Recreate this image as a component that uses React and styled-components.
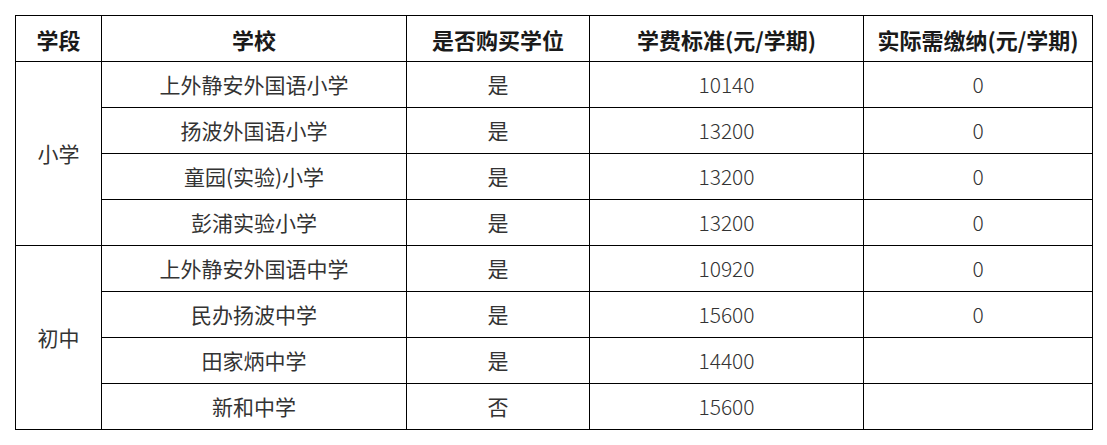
import React from "react";
import styled, { createGlobalStyle } from "styled-components";

const Global = createGlobalStyle`
  html, body { margin: 0; padding: 0; background: #fff; }
  body { font-family: "Noto Sans CJK SC", "Noto Sans", sans-serif; }
`;

const Page = styled.div`
  padding: 15px 0 0 15px;
`;

const Table = styled.table`
  border-collapse: collapse;
  table-layout: fixed;
  width: 1077px;
  border: 1px solid #000;
`;

const HeadCell = styled.th`
  height: 45px;
  padding: 0;
  border: 1px solid #000;
  font-size: 22px;
  font-weight: 700;
  color: #1a1a1a;
  text-align: center;
  vertical-align: middle;
  line-height: 1;
`;

const Cell = styled.td`
  height: 45px;
  padding: 0;
  border: 1px solid #000;
  font-size: 21px;
  font-weight: ${(p) => (p.$num ? 300 : 400)};
  color: #333;
  text-align: center;
  vertical-align: middle;
  line-height: 1;
`;

const widths = [86, 305, 183, 274, 229];
const headers = ["学段", "学校", "是否购买学位", "学费标准(元/学期)", "实际需缴纳(元/学期)"];

const groups = [
  {
    stage: "小学",
    rows: [
      ["上外静安外国语小学", "是", "10140", "0"],
      ["扬波外国语小学", "是", "13200", "0"],
      ["童园(实验)小学", "是", "13200", "0"],
      ["彭浦实验小学", "是", "13200", "0"],
    ],
  },
  {
    stage: "初中",
    rows: [
      ["上外静安外国语中学", "是", "10920", "0"],
      ["民办扬波中学", "是", "15600", "0"],
      ["田家炳中学", "是", "14400", ""],
      ["新和中学", "否", "15600", ""],
    ],
  },
];

export default function App() {
  return (
    <Page>
      <Global />
      <Table>
        <colgroup>
          {widths.map((w, i) => (
            <col key={i} style={{ width: w }} />
          ))}
        </colgroup>
        <thead>
          <tr>
            {headers.map((h) => (
              <HeadCell key={h}>{h}</HeadCell>
            ))}
          </tr>
        </thead>
        <tbody>
          {groups.map((g) =>
            g.rows.map((r, i) => (
              <tr key={g.stage + i}>
                {i === 0 && <Cell rowSpan={g.rows.length}>{g.stage}</Cell>}
                <Cell>{r[0]}</Cell>
                <Cell>{r[1]}</Cell>
                <Cell $num>{r[2]}</Cell>
                <Cell $num>{r[3]}</Cell>
              </tr>
            ))
          )}
        </tbody>
      </Table>
    </Page>
  );
}
